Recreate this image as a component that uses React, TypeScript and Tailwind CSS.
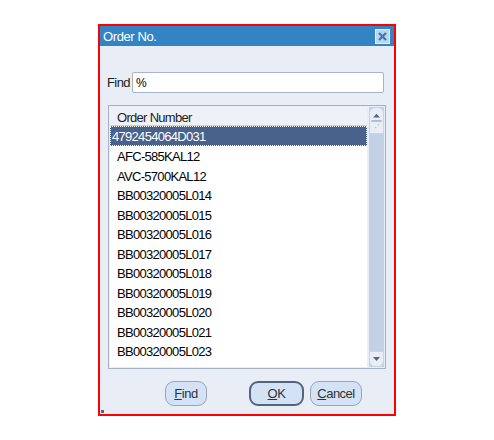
import React from "react";

const rows = [
  "4792454064D031",
  "AFC-585KAL12",
  "AVC-5700KAL12",
  "BB00320005L014",
  "BB00320005L015",
  "BB00320005L016",
  "BB00320005L017",
  "BB00320005L018",
  "BB00320005L019",
  "BB00320005L020",
  "BB00320005L021",
  "BB00320005L023",
];

const font = { fontFamily: '"Liberation Sans", Arial, sans-serif' };

const Btn: React.FC<{ w: string; main?: boolean; children: React.ReactNode }> = ({ w, main, children }) => (
  <button
    className={
      main
        ? `${w} h-[25px] rounded-[9px] border-2 border-[#55647e] bg-[#d3e2f4] text-[13px] tracking-[-0.5px] text-[#333]`
        : `${w} h-[25px] rounded-[9px] border border-[#98a6ba] bg-[#d3e2f4] text-[13px] tracking-[-0.5px] text-[#333]`
    }
  >
    {children}
  </button>
);

export default function App() {
  return (
    <div className="w-[494px] h-[440px] bg-white pt-[24px] pl-[98px]" style={font}>
      <div className="w-[298px] h-[392px] border-2 border-[#ff0000] bg-[#e9edf5] flex flex-col relative">
        <div className="h-[20px] bg-[#3384c5] flex items-center justify-between pl-[3px] pr-[4px]">
          <span className="text-white text-[13px] tracking-[-0.4px] leading-none">Order No.</span>
          <span className="w-[15px] h-[15px] bg-[#bcd6ee] border border-[#e4eefa] flex items-center justify-center">
            <svg width="11" height="11" viewBox="0 0 11 11">
              <path d="M2 2 L9 9 M9 2 L2 9" stroke="#3a7cc0" strokeWidth="2.4" />
            </svg>
          </span>
        </div>

        <div className="flex items-center mt-[26px] pl-[7px]">
          <span className="text-[13px] tracking-[-0.6px] text-[#222] w-[25px]">Find</span>
          <div className="w-[252px] h-[21px] bg-white border border-[#a9b5c6] rounded-[2px] flex items-center pl-[3px] text-[12px] text-black">
            %
          </div>
        </div>

        <div className="ml-[8px] mt-[12px] w-[278px] h-[264px] border border-[#a7b3c4] bg-[#e9edf5] flex p-[1px] text-[13px] tracking-[-0.7px]">
          <div className="w-[258px] h-full bg-white flex flex-col">
            <div className="h-[19px] bg-[#eef2f8] border-b border-[#c6d0de] flex items-center pl-[7px] pt-[3px] text-[#222]">
              Order Number
            </div>
            {rows.map((r, i) =>
              i === 0 ? (
                <div
                  key={r}
                  className="h-[20px] bg-[#48628b] border border-dotted border-white flex items-center pl-[1px] pt-[2px] text-white"
                >
                  {r}
                </div>
              ) : (
                <div key={r} className="h-[19.5px] flex items-center pl-[7px] pt-[2px] text-black">
                  {r}
                </div>
              )
            )}
          </div>
          <div className="ml-[2px] w-[15px] h-full bg-[#c2d1e5] flex flex-col justify-between">
            <div className="h-[27px] bg-[#e9eef6] border border-[#c9d3e1] rounded-t-[6px] flex flex-col items-center">
              <svg width="13" height="26" viewBox="0 0 13 26">
                <path d="M3 10 L6.5 6 L10 10 Z" fill="#56657f" />
                <path d="M1 13.5 H12" stroke="#7c8aa0" strokeWidth="1" />
                <path d="M5 21 L6 20 M8 18 L9 17" stroke="#8a97ab" strokeWidth="1" />
              </svg>
            </div>
            <div className="h-[16px] bg-[#e9eef6] border border-[#c9d3e1] rounded-b-[6px] flex items-center justify-center">
              <svg width="11" height="8" viewBox="0 0 11 8">
                <path d="M2 2 L9 2 L5.5 6 Z" fill="#56657f" />
              </svg>
            </div>
          </div>
        </div>

        <div className="flex items-center mt-[12px] pl-[65px]">
          <Btn w="w-[42px]">
            <u>F</u>ind
          </Btn>
          <div className="ml-[42px]">
            <Btn w="w-[55px]" main>
              <u>O</u>K
            </Btn>
          </div>
          <div className="ml-[6px]">
            <Btn w="w-[52px]">
              <u>C</u>ancel
            </Btn>
          </div>
        </div>
        <div className="absolute left-[1px] bottom-[1px] w-[3px] h-[3px] bg-[#56657f]" />
      </div>
    </div>
  );
}
